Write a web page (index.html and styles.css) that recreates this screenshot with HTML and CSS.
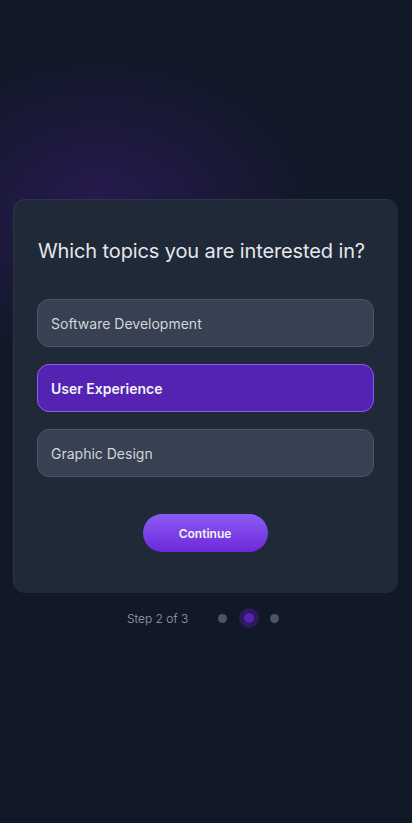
FILE: index.html
```html
<!DOCTYPE html>
<html>
<head>
<meta charset="utf-8">
<link rel="stylesheet" href="styles.css">
</head>
<body>
<div class="glow"></div>
<main class="page">
  <section class="card">
    <h1 class="title">Which topics you are interested in?</h1>
    <div class="options">
      <div class="option">Software Development</div>
      <div class="option selected">User Experience</div>
      <div class="option">Graphic Design</div>
    </div>
    <div class="actions">
      <button class="continue">Continue</button>
    </div>
  </section>
  <div class="steps">
    <span class="step-label">Step 2 of 3</span>
    <div class="dots">
      <span class="dot"></span>
      <span class="dot active"></span>
      <span class="dot"></span>
    </div>
  </div>
</main>
</body>
</html>
```
FILE: styles.css
```css
html, body {
  margin: 0;
  padding: 0;
  height: 100%;
}
body {
  background: #111827;
  font-family: Inter, "Noto Sans", sans-serif;
  color: #e5e7eb;
  overflow: hidden;
  position: relative;
}
.glow {
  position: absolute;
  left: -120px;
  top: 50px;
  width: 440px;
  height: 320px;
  background: radial-gradient(ellipse at center, rgba(76, 29, 149, 0.38) 0%, rgba(76, 29, 149, 0.16) 40%, rgba(17, 24, 39, 0) 70%);
  pointer-events: none;
}
.page {
  position: relative;
  padding-top: 199px;
  display: flex;
  flex-direction: column;
  align-items: flex-start;
}
.card {
  margin-left: 13px;
  width: 385px;
  box-sizing: border-box;
  background: #1f2937;
  border-radius: 12px;
  padding: 40px 24px 41px 24px;
  box-shadow: inset 1px 1px 0 rgba(255,255,255,0.06);
}
.title {
  margin: 0;
  font-size: 20px;
  font-weight: 400;
  line-height: 24px;
  color: #e5e7eb;
  letter-spacing: -0.12px;
  padding-left: 1px;
}
.options {
  margin-top: 36px;
  display: flex;
  flex-direction: column;
  gap: 17px;
}
.option {
  height: 48px;
  box-sizing: border-box;
  border: 1px solid #4b5563;
  background: #374151;
  border-radius: 12px;
  padding: 0 13px;
  display: flex;
  align-items: center;
  font-size: 14px;
  color: #d1d5db;
}
.option.selected {
  background: #5523b2;
  border-color: #8b5cf6;
  color: #f3f4f6;
  font-weight: 600;
}
.actions {
  margin-top: 37px;
  display: flex;
  justify-content: center;
}
.continue {
  width: 125px;
  height: 38px;
  border: none;
  border-radius: 19px;
  background: linear-gradient(180deg, #8b5cf6 0%, #6d28d9 100%);
  color: #f3f4f6;
  font-family: Inter, "Noto Sans", sans-serif;
  font-size: 12px;
  font-weight: 600;
  margin-right: 1px;
}
.steps {
  margin-top: 15px;
  margin-left: 127px;
  display: flex;
  align-items: center;
  height: 20px;
}
.step-label {
  font-size: 12px;
  font-weight: 300;
  color: #9ca3af;
}
.dots {
  display: flex;
  align-items: center;
  margin-left: 30px;
  gap: 11.5px;
}
.dot {
  width: 9px;
  height: 9px;
  border-radius: 50%;
  background: #4b5563;
}
.dot.active {
  width: 10px;
  height: 10px;
  background: #5b21b6;
  box-shadow: 0 0 0 5px rgba(91, 33, 182, 0.35);
  margin: 0 5px;
}
```
